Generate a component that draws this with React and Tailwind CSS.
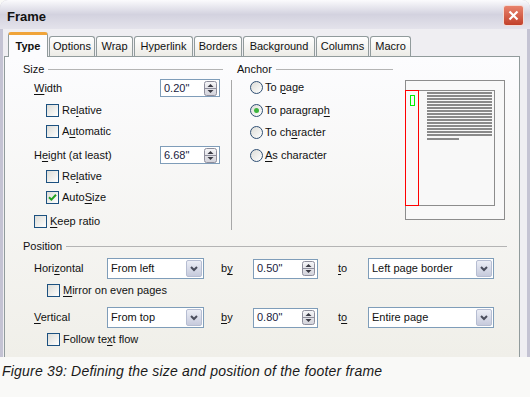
import React from "react";

const U = ({ children }) => <span className="underline underline-offset-[2px]">{children}</span>;

function Checkbox({ checked }) {
  return (
    <span className="relative inline-block w-[13px] h-[13px] shrink-0 border border-[#1c5180] bg-linear-to-br from-[#dcdcd7] to-[#ffffff]">
      {checked && (
        <svg className="absolute left-[1px] top-[1px]" width="9" height="9" viewBox="0 0 9 9">
          <path d="M1 4.2 L3.4 6.6 L8 1.8" stroke="#21a121" strokeWidth="2" fill="none" />
        </svg>
      )}
    </span>
  );
}

function Radio({ checked }) {
  return (
    <span className="w-[13px] h-[13px] shrink-0 rounded-full border border-[#2f4f73] bg-linear-to-br from-[#dcdcd7] to-[#ffffff] flex items-center justify-center">
      {checked && <span className="w-[5px] h-[5px] rounded-full bg-[#3cb43c]" />}
    </span>
  );
}

function Spinner() {
  return (
    <svg width="13" height="15" viewBox="0 0 13 15" className="shrink-0">
      <defs>
        <linearGradient id="sg" x1="0" y1="0" x2="0" y2="1">
          <stop offset="0" stopColor="#f6f6f8" />
          <stop offset="1" stopColor="#d2d2da" />
        </linearGradient>
      </defs>
      <rect x="0.5" y="0.5" width="12" height="14" rx="2" fill="url(#sg)" stroke="#8e8e9c" />
      <line x1="1" y1="7.5" x2="12" y2="7.5" stroke="#8e8e9c" />
      <path d="M3.5 6 L9.5 6 L6.5 3 Z" fill="#3a3a44" />
      <path d="M3.5 9 L9.5 9 L6.5 12 Z" fill="#3a3a44" />
    </svg>
  );
}

function SpinField({ value, className }) {
  return (
    <div className={"border border-[#7f9db9] bg-white flex items-center pl-[3px] pr-[2px] " + className}>
      <span className="flex-1 text-[#1a1a40]">{value}</span>
      <Spinner />
    </div>
  );
}

function Select({ text, className }) {
  return (
    <div className={"h-[21px] border border-[#7f9db9] bg-white flex items-center pl-[3px] pr-[1px] " + className}>
      <span className="flex-1">{text}</span>
      <span className="w-[16px] h-[17px] rounded-[2px] border border-[#b6bdd2] bg-linear-to-b from-[#eceef6] to-[#c6cadc] flex items-center justify-center">
        <svg width="8" height="6" viewBox="0 0 8 6">
          <path d="M1 1 L4 4 L7 1" stroke="#4a4d5c" strokeWidth="2" fill="none" />
        </svg>
      </span>
    </div>
  );
}

function Tab({ label, className }) {
  return (
    <div
      className={
        "h-[20px] ml-[1px] border border-b-0 border-[#919b9c] rounded-t-[3px] bg-linear-to-b from-[#ffffff] to-[#ecebe6] flex items-center justify-center " +
        className
      }
    >
      {label}
    </div>
  );
}

function Preview() {
  const lines = [];
  for (let i = 0; i < 15; i++) {
    lines.push(<rect key={i} x="22" y={12 + i * 3} width="65" height="2" fill="#8a8a8a" />);
  }
  return (
    <svg width="100" height="140" viewBox="0 0 100 140" className="shrink-0">
      <rect x="0.5" y="0.5" width="99" height="139" fill="#f8f8f8" stroke="#8c8c8c" />
      <rect x="0.5" y="10.5" width="89" height="115" fill="none" stroke="#8c8c8c" />
      {lines}
      <rect x="22" y="58" width="32" height="2" fill="#8a8a8a" />
      <rect x="0.5" y="10.5" width="13" height="115" fill="none" stroke="#ff0000" />
      <rect x="5.5" y="15.5" width="4" height="10" fill="none" stroke="#00ee00" />
    </svg>
  );
}

export default function App() {
  return (
    <div className="w-[530px] h-[397px] bg-[#f9f9f7] flex flex-col overflow-hidden font-['Liberation_Sans',Arial,sans-serif] text-[11px] text-[#111]">
      {/* window */}
      <div className="h-[357px] flex flex-col rounded-t-[8px] bg-[#c4c3d3] overflow-hidden shrink-0">
        {/* title bar */}
        <div className="h-[29px] shrink-0 flex items-start bg-linear-to-b from-[#fbfbfd] via-[#d3d2df] to-[#e4e3eb]">
          <div className="flex-1 pl-[7px] pt-[7px] text-[13px] font-bold text-[#111]">Frame</div>
          <div className="mt-[5px] mr-[6px] w-[21px] h-[21px] rounded-[3px] border border-[#f4dcd6] bg-linear-to-b from-[#e8826c] to-[#c2402a] flex items-center justify-center">
            <svg width="11" height="11" viewBox="0 0 11 11">
              <path d="M1.5 1.5 L9.5 9.5 M9.5 1.5 L1.5 9.5" stroke="#ffffff" strokeWidth="2.2" />
            </svg>
          </div>
        </div>
        {/* body */}
        <div className="flex-1 mx-[3px] bg-[#efeef2] flex flex-col">
          {/* tabs */}
          <div className="h-[27px] pt-[3px] pl-[5px] flex items-end relative z-10 shrink-0">
            <div className="w-[40px] h-[25px] -mb-[1px] rounded-t-[3px] border border-b-0 border-[#919b9c] border-t-[3px] border-t-[#f0a43a] bg-[#fcfcfe] flex items-center justify-center font-bold">
              Type
            </div>
            <Tab label="Options" className="w-[46px]" />
            <Tab label="Wrap" className="w-[37px]" />
            <Tab label="Hyperlink" className="w-[59px]" />
            <Tab label="Borders" className="w-[48px]" />
            <Tab label="Background" className="w-[72px]" />
            <Tab label="Columns" className="w-[53px]" />
            <Tab label="Macro" className="w-[41px]" />
          </div>
          {/* panel */}
          <div className="ml-[1px] w-[516px] flex-1 border border-b-0 border-[#919b9c] bg-linear-to-b from-[#fcfcfe] to-[#f0efe9] pl-[18px] pt-[5px] flex flex-col">
            {/* top section */}
            <div className="h-[177px] flex shrink-0">
              {/* Size */}
              <div className="w-[202px] flex flex-col shrink-0">
                <div className="h-[14px] flex items-center pr-[2px]">
                  <span>Size</span>
                  <span className="flex-1 ml-[4px] h-px bg-[#b4b4b4]" />
                </div>
                <div className="h-[18px] mt-[3px] flex items-center pl-[11px]">
                  <span className="flex-1"><U>W</U>idth</span>
                  <SpinField value={'0.20"'} className="w-[60px] h-[18px] mr-[5px]" />
                </div>
                <div className="h-[22px] mt-[2px] flex items-center pl-[23px] gap-[3px]">
                  <Checkbox />
                  <span>Re<U>l</U>ative</span>
                </div>
                <div className="h-[21px] flex items-center pl-[23px] gap-[3px]">
                  <Checkbox />
                  <span>A<U>u</U>tomatic</span>
                </div>
                <div className="h-[18px] mt-[4px] flex items-center pl-[11px]">
                  <span className="flex-1">H<U>e</U>ight (at least)</span>
                  <SpinField value={'6.68"'} className="w-[60px] h-[18px] mr-[5px]" />
                </div>
                <div className="h-[22px] mt-[1px] flex items-center pl-[23px] gap-[3px]">
                  <Checkbox />
                  <span>Re<U>l</U>ative</span>
                </div>
                <div className="h-[21px] flex items-center pl-[23px] gap-[3px]">
                  <Checkbox checked />
                  <span>Auto<U>S</U>ize</span>
                </div>
                <div className="h-[22px] mt-[2px] flex items-center pl-[11px] gap-[3px]">
                  <Checkbox />
                  <span><U>K</U>eep ratio</span>
                </div>
              </div>
              {/* separator */}
              <div className="ml-[6px] mt-[18px] w-px h-[150px] bg-[#a8a8a8] shrink-0" />
              {/* Anchor */}
              <div className="ml-[5px] w-[156px] flex flex-col shrink-0">
                <div className="h-[14px] flex items-center">
                  <span>Anchor</span>
                  <span className="flex-1 ml-[4px] h-px bg-[#b4b4b4]" />
                </div>
                <div className="h-[22px] flex items-center pl-[13px] gap-[2px]">
                  <Radio />
                  <span>To <U>p</U>age</span>
                </div>
                <div className="h-[22px] mt-[1px] flex items-center pl-[13px] gap-[2px]">
                  <Radio checked />
                  <span>To paragrap<U>h</U></span>
                </div>
                <div className="h-[22px] flex items-center pl-[13px] gap-[2px]">
                  <Radio />
                  <span>To ch<U>a</U>racter</span>
                </div>
                <div className="h-[22px] mt-[1px] flex items-center pl-[13px] gap-[2px]">
                  <Radio />
                  <span><U>A</U>s character</span>
                </div>
              </div>
              {/* preview */}
              <div className="ml-[12px] mt-[18px]">
                <Preview />
              </div>
            </div>
            {/* Position */}
            <div className="w-[484px] h-[14px] flex items-center shrink-0">
              <span>Position</span>
              <span className="flex-1 ml-[4px] h-px bg-[#b4b4b4]" />
            </div>
            <div className="h-[21px] mt-[5px] flex items-center pl-[11px] shrink-0">
              <span className="w-[73px]">Hori<U>z</U>ontal</span>
              <Select text="From left" className="w-[97px]" />
              <span className="w-[49px] pl-[17px]">b<U>y</U></span>
              <SpinField value={'0.50"'} className="w-[65px] h-[20px]" />
              <span className="w-[50px] pl-[20px]"><U>t</U>o</span>
              <Select text="Left page border" className="w-[126px]" />
            </div>
            <div className="h-[22px] flex items-center pl-[24px] gap-[3px] shrink-0">
              <Checkbox />
              <span><U>M</U>irror on even pages</span>
            </div>
            <div className="h-[21px] mt-[6px] flex items-center pl-[11px] shrink-0">
              <span className="w-[73px]"><U>V</U>ertical</span>
              <Select text="From top" className="w-[97px]" />
              <span className="w-[49px] pl-[17px]"><U>b</U>y</span>
              <SpinField value={'0.80"'} className="w-[65px] h-[20px]" />
              <span className="w-[50px] pl-[20px]">t<U>o</U></span>
              <Select text="Entire page" className="w-[126px]" />
            </div>
            <div className="h-[22px] flex items-center pl-[24px] gap-[3px] shrink-0">
              <Checkbox />
              <span>Follow te<U>x</U>t flow</span>
            </div>
          </div>
        </div>
      </div>
      {/* caption */}
      <div className="pl-[2px] pt-[5px] text-[14px] italic tracking-[0.2px] text-[#1a1a1a] leading-[18px]">
        Figure 39: Defining the size and position of the footer frame
      </div>
    </div>
  );
}
